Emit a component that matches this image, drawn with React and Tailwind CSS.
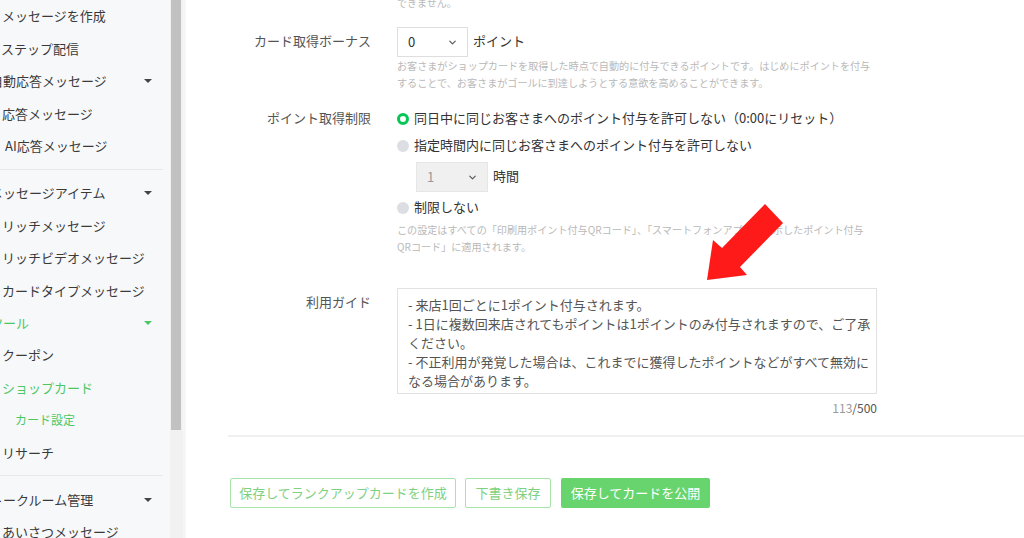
import React from "react";
import { ChevronDown } from "lucide-react";

const jp = { fontFamily: '"Noto Sans CJK JP", "Noto Sans", sans-serif' };

const menu = [
  { t: "メッセージを作成", k: "sub" },
  { t: "ステップ配信", k: "sub", x: "-ml-[1px]" },
  { t: "自動応答メッセージ", k: "top" },
  { t: "応答メッセージ", k: "sub" },
  { t: "AI応答メッセージ", k: "sub", x: "ml-[3px]" },
  { k: "div" },
  { t: "メッセージアイテム", k: "top" },
  { t: "リッチメッセージ", k: "sub" },
  { t: "リッチビデオメッセージ", k: "sub" },
  { t: "カードタイプメッセージ", k: "sub" },
  { t: "ツール", k: "top", green: true },
  { t: "クーポン", k: "sub" },
  { t: "ショップカード", k: "sub", green: true },
  { t: "カード設定", k: "leaf", green: true },
  { t: "リサーチ", k: "sub" },
  { k: "div" },
  { t: "トークルーム管理", k: "top" },
  { t: "あいさつメッセージ", k: "sub" },
];

function Sidebar() {
  return (
    <div className="w-[170px] shrink-0 bg-[#f7f8fa] overflow-hidden">
      {menu.map((m, i) => {
        if (m.k === "div")
          return (
            <div key={i} className="h-[15px] flex items-center pr-[7px]">
              <div className="w-full border-t border-[#e6e8eb]" />
            </div>
          );
        const color = m.green ? "text-[#4cc764]" : "text-[#3a3a3a]";
        if (m.k === "top")
          return (
            <div key={i} className={`h-[32.4px] flex items-center justify-between pr-[18px] ${color}`}>
              <span className="-ml-[10px] text-[13px] whitespace-nowrap">{m.t}</span>
              <span
                className={`w-0 h-0 border-l-[4px] border-r-[4px] border-t-[4px] border-l-transparent border-r-transparent ${
                  m.green ? "border-t-[#4cc764]" : "border-t-[#444]"
                }`}
              />
            </div>
          );
        if (m.k === "leaf")
          return (
            <div key={i} className={`h-[32.4px] flex items-center pl-[15px] text-[12px] ${color}`}>
              {m.t}
            </div>
          );
        return (
          <div key={i} className={`h-[32.4px] flex items-center pl-[2px] text-[13px] whitespace-nowrap ${color}`}>
            <span className={m.x || ""}>{m.t}</span>
          </div>
        );
      })}
    </div>
  );
}

function Radio({ on, children }) {
  return (
    <div className="h-[27px] flex items-center gap-[5px] text-[13px] text-[#333]">
      {on ? (
        <span className="mt-[2px] w-[12px] h-[12px] rounded-full border-[3px] border-[#06c755] bg-white" />
      ) : (
        <span className="mt-[2px] w-[12px] h-[12px] rounded-full bg-[#dcdee3]" />
      )}
      <span>{children}</span>
    </div>
  );
}

function Select({ value, disabled, w }) {
  return (
    <div
      className={`h-[30px] ${w} flex items-center justify-between pl-[10px] pr-[9px] border ${
        disabled ? "bg-[#f0f0f0] border-[#e6e6e6] text-[#999]" : "bg-white border-[#dedede] text-[#333]"
      } text-[13px]`}
    >
      <span className="-mt-[1px]">{value}</span>
      <ChevronDown size={11} strokeWidth={2.5} className="text-[#555]" />
    </div>
  );
}

export default function App() {
  return (
    <div className="relative w-[1024px] h-[538px] overflow-hidden flex bg-white" style={jp}>
      <Sidebar />
      <div className="w-[13px] shrink-0 bg-[#f1f1f1]">
        <div className="ml-[1px] w-[10px] h-[430px] bg-[#c1c1c1]" />
      </div>
      <div className="w-[3px] shrink-0 bg-[#f6f6f6]" />

      <div className="flex-1 pl-[42px] overflow-hidden">
        <div className="grid grid-cols-[143px_480px] gap-x-[26px]">
          <div />
          <div className="-mt-[6px] text-[10px] leading-[17px] text-[#b9b9b9]">できません。</div>

          <div className="mt-[16px] text-right text-[13px] leading-[27px] text-[#555]">カード取得ボーナス</div>
          <div className="mt-[16px]">
            <div className="flex items-center gap-[5px]">
              <Select value="0" w="w-[71px]" />
              <span className="-mt-[2px] text-[13px] text-[#333]">ポイント</span>
            </div>
            <div className="text-[10.1px] leading-[17px] text-[#b9b9b9] whitespace-nowrap">
              お客さまがショップカードを取得した時点で自動的に付与できるポイントです。はじめにポイントを付与
              <br />
              することで、お客さまがゴールに到達しようとする意欲を高めることができます。
            </div>
          </div>

          <div className="mt-[13px] text-right text-[13px] leading-[27px] text-[#555]">ポイント取得制限</div>
          <div className="mt-[13px]">
            <Radio on>同日中に同じお客さまへのポイント付与を許可しない（0:00にリセット）</Radio>
            <Radio>指定時間内に同じお客さまへのポイント付与を許可しない</Radio>
            <div className="mt-[4px] ml-[19px] flex items-center gap-[5px]">
              <Select value="1" disabled w="w-[72px]" />
              <span className="-mt-[2px] text-[13px] text-[#333]">時間</span>
            </div>
            <div className="mt-[1px]">
              <Radio>制限しない</Radio>
            </div>
            <div className="mt-[1px] text-[10.1px] leading-[17px] text-[#b9b9b9] whitespace-nowrap">
              この設定はすべての「印刷用ポイント付与QRコード」、「スマートフォンアプリで表示したポイント付与
              <br />
              QRコード」に適用されます。
            </div>
          </div>

          <div className="mt-[33px] pt-[4px] text-right text-[13px] leading-[19px] text-[#555]">利用ガイド</div>
          <div className="mt-[33px]">
            <div className="h-[106px] border border-[#e2e2e2] px-[10px] pt-[6px] text-[13px] leading-[19px] text-[#555] whitespace-nowrap">
              - 来店1回ごとに1ポイント付与されます。
              <br />
              - 1日に複数回来店されてもポイントは1ポイントのみ付与されますので、ご了承
              <br />
              ください。
              <br />
              - 不正利用が発覚した場合は、これまでに獲得したポイントなどがすべて無効に
              <br />
              なる場合があります。
            </div>
            <div className="mt-[6px] text-right text-[12px] leading-[16px] text-[#555]">
              <span className="text-[#9a9a9a]">113</span>/500
            </div>
          </div>
        </div>

        <div className="mt-[19px] border-t-2 border-[#f0f0f0]" />

        <div className="mt-[41px] ml-[2px] flex gap-[9px] text-[13px]">
          <button className="h-[30px] w-[226px] border border-[#a6e4a9] text-[#7dd181] rounded-[2px]">
            保存してランクアップカードを作成
          </button>
          <button className="h-[30px] w-[86px] border border-[#a6e4a9] text-[#7dd181] rounded-[2px]">
            下書き保存
          </button>
          <button className="ml-[1px] h-[30px] w-[149px] bg-[#68d46d] text-white rounded-[2px]">
            保存してカードを公開
          </button>
        </div>
      </div>

      <svg className="absolute left-[700px] top-[200px]" width="90" height="90" viewBox="0 0 90 90">
        <polygon points="65,4 83,23 40,67 47,75 7,80 13,40 22,48" fill="#ff1a1a" />
      </svg>
    </div>
  );
}
